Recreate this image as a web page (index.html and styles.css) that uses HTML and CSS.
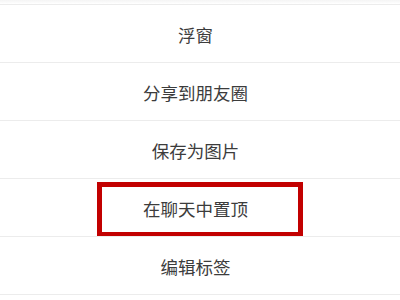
FILE: index.html
```html
<!DOCTYPE html>
<html lang="zh-CN">
<head>
    <meta charset="UTF-8">
    <meta name="viewport" content="width=device-width, initial-scale=1.0">
    <title>菜单</title>
    <link rel="stylesheet" href="styles.css">
</head>
<body>
    <ul class="menu">
        <li class="menu-item">浮窗</li>
        <li class="menu-item">分享到朋友圈</li>
        <li class="menu-item">保存为图片</li>
        <li class="menu-item highlighted">
            在聊天中置顶
            <span class="mark"></span>
        </li>
        <li class="menu-item">编辑标签</li>
    </ul>
</body>
</html>
```

FILE: styles.css
```css
body {
    margin: 0;
    background: #fff;
    font-family: "Noto Sans CJK SC", "Noto Sans", sans-serif;
}

.menu {
    list-style: none;
    margin: 0;
    padding: 4px 0 0;
    background: linear-gradient(#f4f4f4, #fff 4px) top / 100% 4px no-repeat;
}

.menu-item {
    position: relative;
    border-top: 1px solid #ececec;
    display: flex;
    align-items: center;
    justify-content: center;
    padding: 2px 9px 0 0;
    height: 55px;
    font-size: 17.5px;
    color: #3c3c3c;
}

.menu-item:last-child {
    border-bottom: 1px solid #ececec;
}

.mark {
    position: absolute;
    top: 3px;
    left: 97px;
    width: 206px;
    height: 55px;
    box-sizing: border-box;
    border: 5px solid #c20000;
}
```
